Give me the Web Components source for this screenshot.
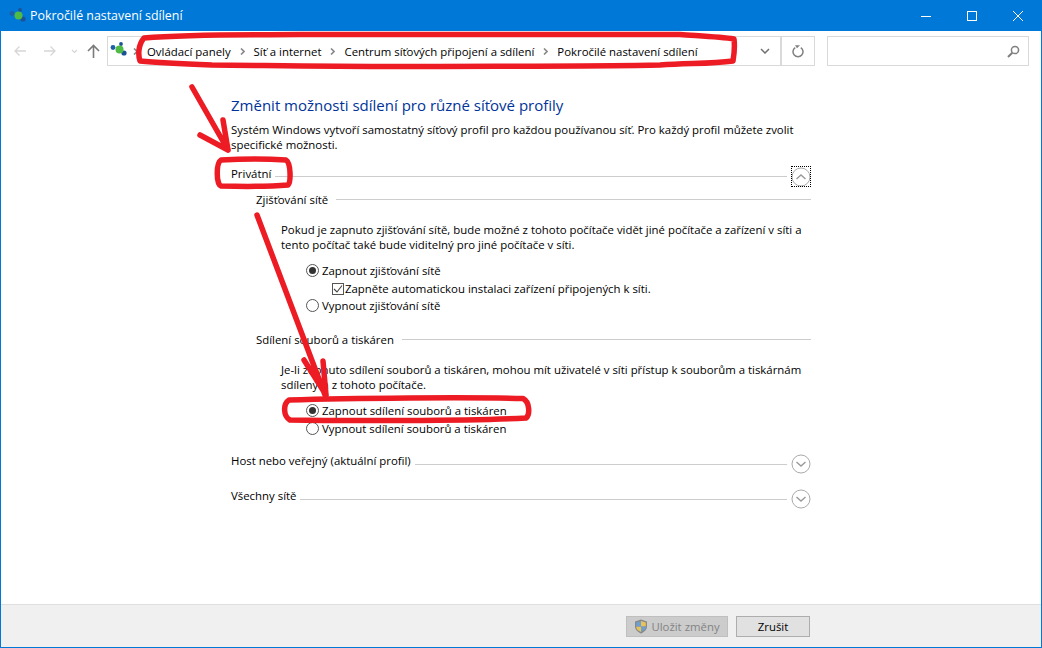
<!DOCTYPE html>
<html>
<head>
<meta charset="utf-8">
<style>
  html, body { margin: 0; height: 100%; }
  body { font: 11.4px "Open Sans", "Noto Sans", sans-serif; color: #000; overflow: hidden; }
</style>
</head>
<body>
<settings-window>
  <title-bar slot="title">Pokročilé nastavení sdílení</title-bar>
  <nav-bar slot="nav"></nav-bar>
  <share-panel slot="main"></share-panel>
  <action-bar slot="footer"></action-bar>
  <red-marks slot="marks"></red-marks>
</settings-window>

<script>
  const networkIcon = `
    <svg width="17" height="16" viewBox="0 0 17 16">
      <circle cx="3" cy="5.5" r="2.4" fill="#1d5fa8"/>
      <circle cx="11" cy="2" r="1.9" fill="#1a5298"/>
      <circle cx="14" cy="11" r="2.6" fill="#1a5298"/>
      <circle cx="9.5" cy="7.5" r="4" fill="#4fbb44"/>
    </svg>`

  // small helper so every element is a shadow root with its own markup
  class Base extends HTMLElement {
    connectedCallback() {
      if (this.shadowRoot) return
      this.attachShadow({ mode: 'open' }).innerHTML = this.markup()
    }
  }

  class SettingsWindow extends Base {
    markup() {
      return `<style>
        :host { display: flex; flex-direction: column; position: relative; width: 1042px; height: 648px;
                box-sizing: border-box; border: 1px solid #0078d7; border-top: 0; background: #fff; overflow: hidden; }
        .main { flex: 1; min-height: 0; }
      </style>
      <slot name="title"></slot>
      <slot name="nav"></slot>
      <div class="main"><slot name="main"></slot></div>
      <slot name="footer"></slot>
      <slot name="marks"></slot>`
    }
  }

  class TitleBar extends Base {
    markup() {
      return `<style>
        :host { display: flex; align-items: center; height: 31px; background: #0078d7; color: #fff; flex: none; }
        .icon { margin: 0 4px 0 8px; display: flex; }
        .text { flex: 1; font-size: 12.4px; }
        .btn { width: 46px; height: 31px; display: flex; align-items: center; justify-content: center; }
      </style>
      <span class="icon">${networkIcon}</span>
      <span class="text"><slot></slot></span>
      <span class="btn"><svg width="10" height="10"><path d="M0 5.5h10" stroke="#fff"/></svg></span>
      <span class="btn"><svg width="10" height="10"><rect x=".5" y=".5" width="9" height="9" fill="none" stroke="#fff"/></svg></span>
      <span class="btn"><svg width="10" height="10"><path d="M0 0l10 10M10 0L0 10" stroke="#fff"/></svg></span>`
    }
  }

  class NavBar extends Base {
    markup() {
      const crumbs = ['Ovládací panely', 'Síť a internet', 'Centrum síťových připojení a sdílení', 'Pokročilé nastavení sdílení']
      const sep = `<svg class="sep" width="5" height="7" viewBox="0 0 5 7"><path d="M1 .5l3 3-3 3" fill="none" stroke="#888" stroke-width="1.6"/></svg>`
      return `<style>
        :host { display: flex; align-items: flex-start; height: 30px; padding: 5px 0 4px; flex: none; background: #fff; }
        .arrows { display: flex; align-items: center; width: 106px; height: 30px; flex: none; }
        .path { width: 674px; height: 30px; box-sizing: border-box; border: 1px solid #d9d9d9; display: flex; align-items: center; }
        .crumbs { flex: 1; display: flex; align-items: center; padding-left: 9px; white-space: nowrap; }
        .crumbs .sep { margin: 0 9px; }
        .icon { display: flex; margin: -3px 0 0 2px; }
        .path > .sep { margin-left: 6px; }
        .drop { width: 30px; height: 100%; display: flex; align-items: center; justify-content: center; flex: none; }
        .refresh { width: 34px; height: 30px; box-sizing: border-box; border: 1px solid #d9d9d9;
                   display: flex; align-items: center; justify-content: center; flex: none; }
        .search { margin-left: 12px; width: 202px; height: 30px; box-sizing: border-box; border: 1px solid #d9d9d9;
                  display: flex; align-items: center; justify-content: flex-end; padding-right: 8px; flex: none; }
      </style>
      <div class="arrows">
        <svg style="margin-left:12px" width="14" height="12" viewBox="0 0 14 12"><path d="M13 6H2M6.500 1.500L2 6l4.500 4.500" fill="none" stroke="#d6d6d6" stroke-width="1.300"/></svg>
        <svg style="margin-left:16px" width="14" height="12" viewBox="0 0 14 12"><path d="M1 6h11M7.500 1.500L12 6l-4.500 4.500" fill="none" stroke="#d6d6d6" stroke-width="1.300"/></svg>
        <svg style="margin-left:14px" width="7" height="5" viewBox="0 0 7 5"><path d="M1 1l2.500 2.500L6 1" fill="none" stroke="#d6d6d6" stroke-width="1.200"/></svg>
        <svg style="margin-left:9px" width="13" height="14" viewBox="0 0 13 14"><path d="M6.500 14V2M1 7l5.500-5.500L12 7" fill="none" stroke="#7a7a7a" stroke-width="1.600"/></svg>
      </div>
      <div class="path">
        <span class="icon">${networkIcon}</span>
        ${sep}
        <div class="crumbs">${crumbs.map(c => `<span>${c}</span>`).join(sep)}</div>
        <span class="drop"><svg width="10" height="6" viewBox="0 0 10 6"><path d="M1 1l4 4 4-4" fill="none" stroke="#707070" stroke-width="1.500"/></svg></span>
      </div>
      <div class="refresh"><svg width="12" height="13" viewBox="0 0 12 13"><path d="M3.200 2.600A5 5 0 1 0 8.800 2.600" fill="none" stroke="#808080" stroke-width="1.500"/><path d="M8 .3L3 .3l2 3z" fill="#808080"/></svg></div>
      <div class="search"><svg width="13" height="13" viewBox="0 0 13 13"><circle cx="8" cy="5" r="3.600" fill="none" stroke="#808080" stroke-width="1.500"/><path d="M5.300 7.700L1 12" stroke="#808080" stroke-width="2"/></svg></div>`
    }
  }

  // heading with a rule running to the right, optional round toggle
  class SectionRow extends Base {
    markup() {
      const toggle = this.getAttribute('toggle')
      let btn = ''
      if (toggle) {
        const d = toggle === 'up' ? 'M5.500 12l4.500-4 4.500 4' : 'M5.500 8l4.500 4 4.500-4'
        const focus = toggle === 'up' ? 'outline: 1px dotted #000; outline-offset: -1px; height: 21px;' : ''
        btn = `<span class="btn" style="${focus}"><svg width="20" height="20" viewBox="0 0 20 20"><circle cx="10" cy="10" r="9" fill="none" stroke="#aaa"/><path d="${d}" fill="none" stroke="#999" stroke-width="1.400"/></svg></span>`
      }
      return `<style>
        :host { display: flex; align-items: center; height: ${toggle === 'up' ? 21 : 20}px; }
        .label { ${toggle ? 'padding-bottom: 7px;' : ''} }
        .rule { flex: 1; height: 1px; background: #ccc; margin-left: ${toggle ? 4 : 8}px; }
        .btn { display: flex; align-items: center; margin-left: 4px; }
      </style>
      <span class="label"><slot></slot></span><span class="rule"></span>${btn}`
    }
  }

  class RadioOption extends Base {
    markup() {
      const on = this.hasAttribute('checked')
      return `<style>
        :host { display: flex; align-items: center; gap: 3px; height: 17px; }
        svg { flex: none; }
      </style>
      <svg width="13" height="13" viewBox="0 0 13 13"><circle cx="6.500" cy="6.500" r="6" fill="#fff" stroke="#555"/>${on ? '<circle cx="6.500" cy="6.500" r="3.500" fill="#333"/>' : ''}</svg>
      <span><slot></slot></span>`
    }
  }

  class CheckOption extends Base {
    markup() {
      return `<style>
        :host { display: flex; align-items: center; gap: 1px; height: 17px; }
      </style>
      <svg width="12" height="12" viewBox="0 0 12 12"><rect x=".5" y=".5" width="11" height="11" fill="#fff" stroke="#555"/><path d="M2 6l3 3 5-6.500" fill="none" stroke="#444" stroke-width="1.100"/></svg>
      <span><slot></slot></span>`
    }
  }

  class SharePanel extends Base {
    markup() {
      return `<style>
        :host { display: block; padding: 0 230px; box-sizing: border-box; width: 1040px; }
        h1 { font-size: 15px; font-weight: 400; color: #003399; margin: 25px 0 0; line-height: 20px; }
        .intro { margin: 7px 0 0; line-height: 15px; }
        .priv { margin-top: 14px; }
        .sub { margin: 2px 0 0 25px; }
        .para { margin: 13px 0 0 50px; line-height: 15px; width: 530px; }
        .opts { margin: 10px 0 0 75px; }
        .check { margin: 1px 0 0 26px; }
        .second { margin-top: 15px; }
        .para2 { margin-top: 13px; }
        .opts2 { margin-top: 10px; }
        .off2 { margin-top: 1px; }
        .host { margin-top: 17px; }
        .all { margin-top: 15px; }
      </style>
      <h1>Změnit možnosti sdílení pro různé síťové profily</h1>
      <p class="intro">Systém Windows vytvoří samostatný síťový profil pro každou používanou síť. Pro každý profil můžete zvolit specifické možnosti.</p>
      <section-row class="priv" toggle="up">Privátní</section-row>
      <section-row class="sub">Zjišťování sítě</section-row>
      <p class="para">Pokud je zapnuto zjišťování sítě, bude možné z tohoto počítače vidět jiné počítače a zařízení v síti a tento počítač také bude viditelný pro jiné počítače v síti.</p>
      <div class="opts">
        <radio-option checked>Zapnout zjišťování sítě</radio-option>
        <check-option class="check">Zapněte automatickou instalaci zařízení připojených k síti.</check-option>
        <radio-option>Vypnout zjišťování sítě</radio-option>
      </div>
      <section-row class="sub second">Sdílení souborů a tiskáren</section-row>
      <p class="para para2">Je-li zapnuto sdílení souborů a tiskáren, mohou mít uživatelé v síti přístup k souborům a tiskárnám sdíleným z tohoto počítače.</p>
      <div class="opts opts2">
        <radio-option checked>Zapnout sdílení souborů a tiskáren</radio-option>
        <radio-option class="off2">Vypnout sdílení souborů a tiskáren</radio-option>
      </div>
      <section-row class="host" toggle="down">Host nebo veřejný (aktuální profil)</section-row>
      <section-row class="all" toggle="down">Všechny sítě</section-row>`
    }
  }

  class ActionBar extends Base {
    markup() {
      return `<style>
        :host { display: flex; justify-content: flex-end; align-items: center; gap: 8px; flex: none; height: 42px;
                padding-right: 231px; background: #f0f0f0; border-top: 1px solid #dfdfdf; }
        .b { width: 74px; height: 21px; box-sizing: border-box; border: 1px solid #adadad; background: #e1e1e1;
             display: flex; align-items: center; justify-content: center; }
        .off { width: 102px; background: #ccc; border-color: #bfbfbf; color: #838383; gap: 3px; }
      </style>
      <span class="b off"><svg width="14" height="15" viewBox="0 0 14 15"><path d="M7 .5l6 2v5c0 3.500-3 5.500-6 7-3-1.500-6-3.500-6-7v-5z" fill="#888"/><path d="M7 2l4.800 1.500V7.500H7zM7 7.500v5.500C4.500 12 2.200 10.300 2.200 7.500H7z" fill="#e8c25a"/><path d="M7 2L2.200 3.500v4H7zM7 7.500V13c2.500-1 4.800-2.700 4.800-5.500z" fill="#6f9fd0"/></svg>Uložit změny</span>
      <span class="b">Zrušit</span>`
    }
  }

  // the red marker drawn over the screenshot
  class RedMarks extends Base {
    markup() {
      return `<style>
        :host { position: absolute; left: -1px; top: 0; pointer-events: none; }
        svg { display: block; }
        path { fill: none; stroke: #ed1c24; stroke-width: 5.500; stroke-linecap: round; stroke-linejoin: round; }
      </style>
      <svg width="1042" height="648" viewBox="0 0 1042 648">
        <path d="M144 38C190 34 230 35 300 34.500C450 33.500 600 33.500 680 34.500C700 36 720 37 734 39C735 47 734 55 733 61C710 64 690 63 660 65C600 66.500 500 66 400 66.500C320 66.500 270 65.500 212 65C185 64 160 63 140 61C138 55 138 45 144 38Z"/>
        <path d="M221 160C240 159 270 159 286 160C291 163 291 182 288 185C270 186.500 240 186.500 221 186C216 184 216 163 221 160Z"/>
        <path d="M289 400C350 398 470 397 523 398.500C530 402 530 415 526 418C470 421 340 421 290 420C283 416 283 404 289 400Z"/>
        <path d="M192 87L228 150M223 120L228 150M200 135L228 150"/>
        <path d="M257 215L325 395M304 360L326 395M323 361L326 395"/>
      </svg>`
    }
  }

  customElements.define('settings-window', SettingsWindow)
  customElements.define('title-bar', TitleBar)
  customElements.define('nav-bar', NavBar)
  customElements.define('section-row', SectionRow)
  customElements.define('radio-option', RadioOption)
  customElements.define('check-option', CheckOption)
  customElements.define('share-panel', SharePanel)
  customElements.define('action-bar', ActionBar)
  customElements.define('red-marks', RedMarks)
</script>
</body>
</html>
